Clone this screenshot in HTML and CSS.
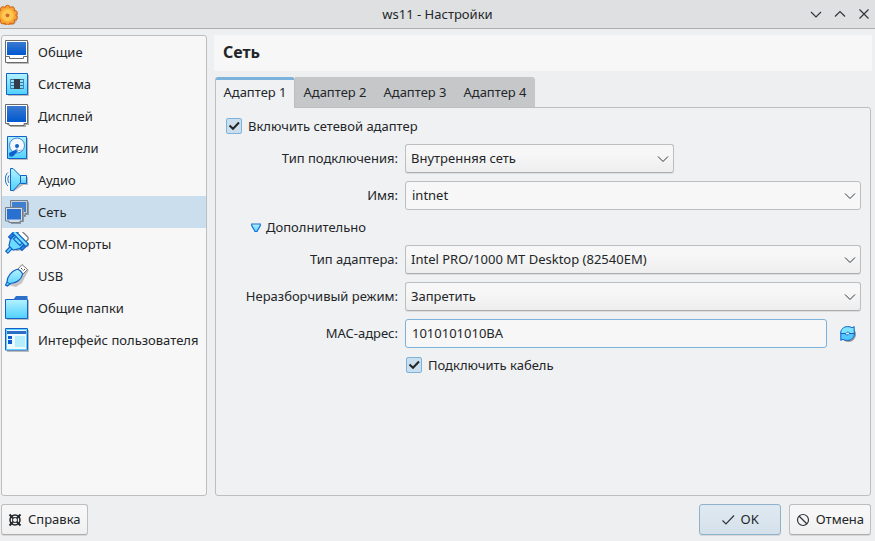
FILE: index.html
```html
<!DOCTYPE html>
<html lang="ru">
<head>
<meta charset="utf-8">
<title>ws11 - Настройки</title>
<link rel="stylesheet" href="styles.css">
</head>
<body>
<svg class="defs" aria-hidden="true">
  <defs>
    <linearGradient id="screen" x1="0" y1="0" x2="0" y2="1"><stop offset="0" stop-color="#3a7ad0"/><stop offset="1" stop-color="#0058d0"/></linearGradient>
    <linearGradient id="cyan" x1="0" y1="0" x2="0" y2="1"><stop offset="0" stop-color="#b4f2ff"/><stop offset="1" stop-color="#4fd0ff"/></linearGradient>
    <radialGradient id="sun"><stop offset="0" stop-color="#ffc45c"/><stop offset="0.6" stop-color="#ffc94f"/><stop offset="1" stop-color="#f59a2c"/></radialGradient>
    <symbol id="chevron" viewBox="0 0 12 8"><path d="M1 1.500l5 5 5-5" fill="none" stroke="#31363b"/></symbol>
    <symbol id="tick" viewBox="0 0 16 16"><path d="M3.500 7.500l3.500 3.300 6-6.300" fill="none" stroke="#232629" stroke-width="2"/></symbol>
  </defs>
</svg>

<header class="titlebar">
  <svg class="app-icon" viewBox="0 0 20 22" aria-hidden="true">
    <circle cx="8.500" cy="13.500" r="9.500" fill="#9a8a80" opacity=".5"/>
    <g fill="#f5a22e" stroke="#d2601c">
      <circle cx="7.500" cy="4.800" r="2.500"/><circle cx="12" cy="6.200" r="2.500"/><circle cx="14.800" cy="10" r="2.500"/><circle cx="14.800" cy="14.600" r="2.500"/><circle cx="12" cy="18.400" r="2.500"/><circle cx="7.500" cy="19.800" r="2.500"/><circle cx="3" cy="18.400" r="2.500"/><circle cx="0" cy="14.600" r="2.500"/><circle cx="0" cy="10" r="2.500"/><circle cx="3" cy="6.200" r="2.500"/>
    </g>
    <circle cx="7.500" cy="12.300" r="8" fill="url(#sun)"/>
    <circle cx="7.500" cy="12.300" r="1.900" fill="#cf6a22"/>
  </svg>
  <h1>ws11 - Настройки</h1>
  <div class="window-buttons">
    <button type="button" aria-label="Свернуть"><svg viewBox="0 0 12 12"><path d="M1 4l5 5 5-5"/></svg></button>
    <button type="button" aria-label="Развернуть"><svg viewBox="0 0 12 12"><path d="M1 8.500l5-5 5 5"/></svg></button>
    <button type="button" aria-label="Закрыть"><svg viewBox="0 0 12 12"><path d="M1.500 1.500l9 9M10.500 1.500l-9 9"/></svg></button>
  </div>
</header>

<main class="content">
  <nav class="sidebar" aria-label="Разделы">
    <a href="#general"><svg viewBox="0 0 24 24"><path d="M2 2h22v22H2z" fill="#bbb"/><path d="M.5.5h22v22H.5z" fill="#fff" stroke="#6b6b6b"/><path d="M2 2h19v13H2z" fill="url(#screen)"/><path d="M1 16.500h3.500v2h14v-2H22" fill="none" stroke="#6b6b6b"/></svg>Общие</a>
    <a href="#system"><svg viewBox="0 0 24 24"><path d="M3 3h21v21H3z" fill="#bbb"/><path d="M1.500 1.500h21v21h-21z" fill="url(#cyan)" stroke="#1262c8"/><path d="M5 7.500h14M5 10.500h14M5 13.500h14M5 16.500h14" stroke="#426f92"/><path d="M5.500 7v10M18.500 7v10" stroke="#4386b0"/><path d="M9 7h6v10H9z" fill="#343b48"/></svg>Система</a>
    <a href="#display"><svg viewBox="0 0 24 24"><path d="M2 2h22v19h-3v2H5v-2H2z" fill="#aaa"/><path d="M.5.5h22v19H19v2H4v-2H.5z" fill="#fff" stroke="#6b6b6b"/><path d="M2 2h19v16H2z" fill="url(#screen)"/></svg>Дисплей</a>
    <a href="#storage"><svg viewBox="0 0 24 24"><path d="M4 2h19v22H4z" fill="#bbb"/><path d="M2.500.5h19v22h-19z" fill="url(#cyan)" stroke="#1262c8"/><circle cx="12" cy="9.500" r="7.500" fill="#f4faff" stroke="#3d87d4"/><path d="M8 20.500H4.500L4 17l6-3 2-1 1 2z" fill="#0f61d0"/><circle cx="12" cy="10" r="2" fill="#1262c8"/><path d="M12 12v3l5-1" fill="none" stroke="#8bbce8"/></svg>Носители</a>
    <a href="#audio"><svg viewBox="0 0 24 24"><path d="M7 2l10 7h6v8h-5L8 24z" fill="#bbb"/><path d="M5.500.5H8L15.500 8v6.500l-7 8h-3z" fill="url(#cyan)" stroke="#1262c8"/><path d="M15.500 7.500h6v8h-6z" fill="url(#cyan)" stroke="#1262c8"/><path d="M4 7.500C2.500 9 2.500 13 4 15M3 4.500C-.5 7-.5 15 3 18" fill="none" stroke="#1f70c8"/></svg>Аудио</a>
    <a href="#network" class="current" aria-current="page"><svg viewBox="0 0 24 24"><path d="M7 2h17v13h-3v2H7z" fill="#8d98a4"/><path d="M5.500.5h17v13H20v2H8v-2H5.500z" fill="#c3d0dc" stroke="#73808c"/><path d="M7 2h14v10H7z" fill="#3f7fd0"/><path d="M3 9h16v13h-3v2H6v-2H3z" fill="#8d98a4"/><path d="M.5 7.500h17v13.500H15v1.500H4V21H.500z" fill="#d3dfea" stroke="#73808c"/><path d="M2 9h14v10.500H2z" fill="#2970d0"/></svg>Сеть</a>
    <a href="#serial"><svg viewBox="0 0 24 24"><g transform="translate(13 12) rotate(45)" fill="#a8a8a8"><path d="M-9-8H9v4H7V2L4 6h-8l-3-4v-6h-2z"/></g><g transform="translate(11 11) rotate(45)" stroke="#1262c8" stroke-width="1.200"><path d="M-6-7v-4l1.500-1.500h9L6-11v4z" fill="#fff" stroke="#777"/><path d="M-1.500 6h3v7h-3z" fill="#62cfff"/><path d="M-9.500-4h2.500v5h-2.500zM7-4h2.500v5H7z" fill="#2f86e8"/><path d="M-6.500-5h13v6.500L3 7h-6l-3.500-5.500z" fill="#6adaff"/><path d="M-9.500-8h19v3.500h-19z" fill="#7fe0ff"/><path d="M-4.500-4v3h9v-3" fill="none"/></g></svg>COM-порты</a>
    <a href="#usb"><svg viewBox="0 0 24 24"><path d="M3 21l4-9 6-5 4-4 7 3-4 7-3 6-6 4z" fill="#c4c4c4"/><path d="M13 5l4-4.500 5.500 5L18 10z" fill="#fff" stroke="#777"/><path d="M16 4l1.500 1.500M18.500 6.500L20 5" stroke="#444"/><path d="M11.500 5.500c2-1 6 2.500 6 5-1 5-6 8.500-12 9l-3 2.500-2-1L2 18c0-6 5-11 9.500-12.500z" fill="url(#cyan)" stroke="#1262c8" stroke-width="1.200"/><path d="M2 18l3 2" stroke="#1262c8"/></svg>USB</a>
    <a href="#folders"><svg viewBox="0 0 24 24"><path d="M2 4h22v20H2z" fill="#bbb"/><path d="M.5 3.500h22v19H.500z" fill="url(#cyan)" stroke="#1262c8"/><path d="M8 4l3-4h11.500v4z" fill="#2c70cc"/></svg>Общие папки</a>
    <a href="#interface"><svg viewBox="0 0 24 24"><path d="M2 2h22v22H2z" fill="#bbb"/><path d="M.5.5h22v21.500H.5z" fill="#effaff" stroke="#1262c8"/><path d="M1.500 1.500h20v20h-20z" fill="none" stroke="#63cfff"/><path d="M2 3h19v3H2z" fill="#2c6dc8"/><path d="M3 8h4v3H3zM3 12h4v4H3z" fill="#0b5ed2"/><path d="M10 8h10v11H10z" fill="#b4eefc"/></svg>Интерфейс пользователя</a>
  </nav>

  <section class="page">
    <h2>Сеть</h2>
    <div class="tabs" role="tablist">
      <button type="button" role="tab" aria-selected="true">Адаптер 1</button>
      <button type="button" role="tab" aria-selected="false">Адаптер 2</button>
      <button type="button" role="tab" aria-selected="false">Адаптер 3</button>
      <button type="button" role="tab" aria-selected="false">Адаптер 4</button>
    </div>
    <form class="pane" id="settings">
      <label class="check full"><span class="box"><input type="checkbox" checked><svg><use href="#tick"/></svg></span>Включить сетевой адаптер</label>

      <label class="name" for="attach">Тип подключения:</label>
      <div class="combo short"><select id="attach"><option>Внутренняя сеть</option></select><svg><use href="#chevron"/></svg></div>

      <label class="name" for="netname">Имя:</label>
      <div class="combo"><input id="netname" type="text" value="intnet"><svg><use href="#chevron"/></svg></div>

      <button type="button" class="advanced full" aria-expanded="true"><svg viewBox="0 0 10 10"><path d="M.7 1h8.600v1.500L6 8.500H4L.7 2.500z" fill="url(#cyan)" stroke="#1a6fd6" stroke-width="1.200"/></svg>Дополнительно</button>

      <label class="name" for="type">Тип адаптера:</label>
      <div class="combo"><select id="type"><option>Intel PRO/1000 MT Desktop (82540EM)</option></select><svg><use href="#chevron"/></svg></div>

      <label class="name" for="mode">Неразборчивый режим:</label>
      <div class="combo"><select id="mode"><option>Запретить</option></select><svg><use href="#chevron"/></svg></div>

      <label class="name" for="mac">MAC-адрес:</label>
      <div class="mac">
        <input id="mac" type="text" value="1010101010BA">
        <button type="button" class="refresh" aria-label="Обновить MAC-адрес"><svg viewBox="0 0 16 16"><circle cx="8.500" cy="8.500" r="7.500" fill="#999"/><path d="M.6 7.500C.6 3.500 3.500.6 7.500.6c2 0 3.500.4 4.500 1.200L14.200.6v6.900H10c-.5-1.500-3.500-2-4.500 0z" fill="#7fe4ff" stroke="#1262c8"/><path d="M14.400 7.500c0 4-2.900 6.900-6.900 6.900-2 0-3.500-.4-4.500-1.200L.8 14.400V7.500H5c.5 1.500 3.500 2 4.500 0z" fill="#51c9ff" stroke="#1262c8"/><path d="M6 7.500h3" stroke="#dff4ff" stroke-width="1.500"/></svg></button>
      </div>

      <label class="check cable"><span class="box"><input type="checkbox" checked><svg><use href="#tick"/></svg></span>Подключить кабель</label>
    </form>
  </section>
</main>

<footer class="actions">
  <button type="button" class="push help"><svg viewBox="0 0 14 14" fill="none" stroke="#232629"><circle cx="7" cy="7" r="5" stroke-width="1.500"/><circle cx="7" cy="7" r="2.500"/><path d="M1.500 1.500l3.700 3.700M12.500 1.500L8.800 5.200M1.500 12.500l3.700-3.700M12.500 12.500L8.800 8.800" stroke-width="2"/></svg>Справка</button>
  <button type="submit" form="settings" class="push ok"><svg viewBox="0 0 14 14" fill="none" stroke="#31363b"><path d="M1.500 7.500L5 11l8-8.500" stroke-width="1.200"/></svg>OK</button>
  <button type="button" class="push cancel"><svg viewBox="0 0 14 14" fill="none" stroke="#31363b" stroke-width="1.200"><circle cx="7" cy="7" r="5.500"/><path d="M3 3l8 8"/></svg>Отмена</button>
</footer>
</body>
</html>
```
FILE: styles.css
```css
* {
  box-sizing: border-box;
}

body {
  margin: 0;
  min-height: 100vh;
  display: flex;
  flex-direction: column;
  background: #eeeff1;
  color: #232629;
  font: 13px/19px "Noto Sans", sans-serif;
}

button,
input,
select {
  margin: 0;
  font: inherit;
  color: inherit;
}

svg {
  display: block;
  flex: none;
}

.defs {
  position: absolute;
  width: 0;
  height: 0;
}

/* Title bar */
.titlebar {
  display: grid;
  grid-template-columns: 1fr auto 1fr;
  align-items: center;
  height: 29px;
  background: #dee0e2;
  border-bottom: 1px solid #abadaf;
}

.app-icon {
  width: 20px;
  height: 22px;
}

.titlebar h1 {
  margin: 0;
  font-size: 13px;
  line-height: 18px;
  font-weight: 400;
}

.window-buttons {
  display: flex;
  justify-content: flex-end;
  gap: 12px;
  padding-right: 5px;
}

.window-buttons button {
  padding: 0;
  border: 0;
  background: none;
}

.window-buttons svg {
  width: 12px;
  height: 12px;
  fill: none;
  stroke: #31363b;
  stroke-width: 1.2;
}

/* Main area */
.content {
  flex: 1;
  display: flex;
  gap: 8px;
  padding: 6px 4px 8px 1px;
}

.sidebar {
  flex: 0 0 206px;
  border: 1px solid #bcbebf;
  border-radius: 3px;
  background: #f7f7f7;
}

.sidebar a {
  display: flex;
  align-items: center;
  gap: 9px;
  height: 32px;
  padding-left: 3px;
  color: inherit;
  text-decoration: none;
}

.sidebar a.current {
  background: #cbdeed;
}

.sidebar svg {
  width: 24px;
  height: 24px;
}

.page {
  flex: 1;
  min-width: 0;
  display: flex;
  flex-direction: column;
}

.page h2 {
  margin: 0 -1px 6px;
  padding: 6px 9px 8px;
  background: #f7f7f7;
  font-size: 16px;
  line-height: 22px;
  font-weight: 700;
}

.tabs {
  display: flex;
  margin-bottom: -1px;
}

.tabs button {
  width: 80px;
  height: 31px;
  padding: 0;
  border: 0;
  border-bottom: 1px solid #bcbebf;
  background: #c6c7c9;
}

.tabs button:last-child {
  border-top-right-radius: 3px;
}

.tabs button[aria-selected="true"] {
  position: relative;
  border: solid #bcbebf;
  border-width: 0 1px;
  border-radius: 3px 3px 0 0;
  background: linear-gradient(#7cb3dd 3px, #f0f1f3 3px);
}

.pane {
  flex: 1;
  display: grid;
  grid-template-columns: 172px 1fr;
  align-content: start;
  gap: 8px 7px;
  padding: 9px 9px 9px 10px;
  border: 1px solid #bcbebf;
  border-radius: 0 3px 3px 3px;
  background: #f0f1f3;
}

.full {
  grid-column: 1 / -1;
  justify-self: start;
}

.name {
  align-self: center;
  text-align: right;
}

.check {
  display: flex;
  align-items: center;
  gap: 6px;
}

.cable {
  grid-column: 2;
  justify-self: start;
  padding-left: 1px;
}

.box {
  display: grid;
  padding-bottom: 1px;
}

.box > * {
  grid-area: 1 / 1;
  width: 16px;
  height: 16px;
}

.box input {
  appearance: none;
  border: 1px solid #7cb3dd;
  border-radius: 2px;
  background: #cbdeed;
}

.box svg,
.combo svg {
  pointer-events: none;
}

.combo {
  display: grid;
  align-items: center;
}

.combo > * {
  grid-area: 1 / 1;
}

.combo svg {
  justify-self: end;
  width: 12px;
  height: 8px;
  margin-right: 5px;
}

.combo.short {
  width: 59%;
}

.combo select,
.pane input[type="text"] {
  appearance: none;
  width: 100%;
  height: 29px;
  border: 1px solid #bcbebf;
  border-radius: 3px;
  outline: 0;
}

.combo select {
  padding: 0 20px 0 5px;
  border-bottom-color: #abadaf;
  background: linear-gradient(#f7f7f7 30%, #eeeeee);
  box-shadow: 0 1px 0 #dcdddf;
}

.pane input[type="text"] {
  padding: 0 6px 1px;
  background: #f7f7f7;
}

.advanced {
  display: flex;
  align-items: center;
  gap: 5px;
  padding: 0 0 0 25px;
  border: 0;
  background: none;
}

.advanced svg {
  width: 10px;
  height: 10px;
}

.mac {
  display: flex;
  align-items: center;
  gap: 13px;
}

.mac input[type="text"] {
  flex: 1;
  min-width: 0;
  border-color: #7cb3dd;
}

.refresh {
  margin-right: 5px;
  padding: 0;
  border: 0;
  background: none;
}

.refresh svg {
  width: 16px;
  height: 16px;
}

/* Bottom buttons */
.actions {
  display: flex;
  gap: 8px;
  padding: 0 4px 6px 1px;
}

.push {
  display: flex;
  align-items: center;
  justify-content: center;
  gap: 6px;
  min-width: 82px;
  height: 31px;
  padding: 0 6px;
  border: 1px solid #bcbebf;
  border-bottom-color: #abadaf;
  border-radius: 3px;
  background: linear-gradient(#f7f7f7 30%, #f0f0f0);
  box-shadow: 0 1px 0 #d6d7d9;
}

.push svg {
  width: 14px;
  height: 14px;
}

.help {
  margin-right: auto;
}

.ok {
  border-color: #8fb2cb;
  background: linear-gradient(#dfe9f1, #d5e1ea);
}
```
